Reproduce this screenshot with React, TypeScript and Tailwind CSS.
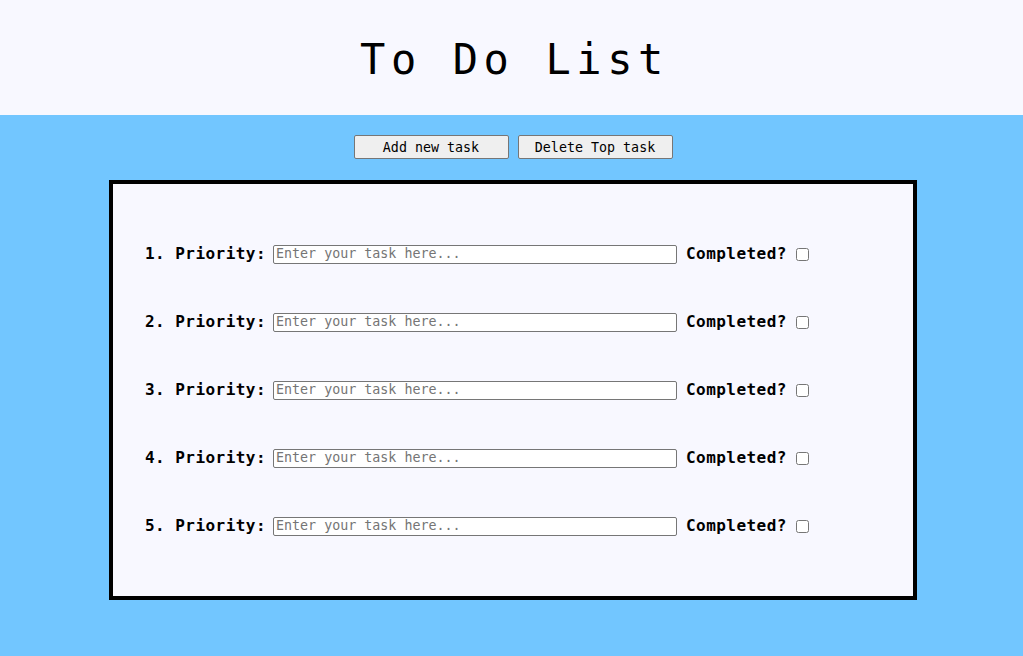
import { useState } from 'react'

const mono = { fontFamily: '"DejaVu Sans Mono", "Liberation Mono", monospace' }

interface TaskRowProps {
  index: number
}

function TaskRow({ index }: TaskRowProps) {
  const [done, setDone] = useState(false)

  return (
    <div className="flex h-[68px] items-center text-[16px] font-bold tracking-[0.45px] text-black">
      <span>{index}. Priority:</span>
      <input
        type="text"
        placeholder="Enter your task here..."
        className="ml-[7px] h-[19px] w-[404px] rounded-[2px] border border-[#767676] bg-white px-[2px] text-[13.33px] font-normal tracking-normal placeholder:text-[#757575] outline-none"
        style={mono}
      />
      <span className="ml-[9px]">Completed?</span>
      <input
        type="checkbox"
        checked={done}
        onChange={() => setDone((prev) => !prev)}
        className="ml-[9px] size-[13px]"
      />
    </div>
  )
}

export default function App() {
  const [count, setCount] = useState(5)

  return (
    <div className="min-h-screen bg-[#72c6ff]" style={mono}>
      <header className="flex h-[115px] items-center justify-center bg-[#f8f8ff]">
        <h1 className="pl-[6px] pt-[4px] text-[42px] font-normal tracking-[5.6px] text-black">
          To Do List
        </h1>
      </header>
      <div className="flex justify-center gap-[9px] pl-[3px] pt-[20px]">
        <button
          type="button"
          onClick={() => setCount((c) => c + 1)}
          className="h-[24px] w-[155px] rounded-[2px] border border-[#767676] bg-[#efefef] pt-[1px] text-[13.33px] text-black">
          Add new task
        </button>
        <button
          type="button"
          onClick={() => setCount((c) => Math.max(0, c - 1))}
          className="h-[24px] w-[155px] rounded-[2px] border border-[#767676] bg-[#efefef] pt-[1px] text-[13.33px] text-black">
          Delete Top task
        </button>
      </div>
      <main className="ml-[109px] mt-[21px] w-[808px] border-4 border-black bg-[#f8f8ff] pb-[36px] pl-[32px] pt-[36px]">
        {Array.from({ length: count }, (_, i) => (
          <TaskRow key={i} index={i + 1} />
        ))}
      </main>
    </div>
  )
}
